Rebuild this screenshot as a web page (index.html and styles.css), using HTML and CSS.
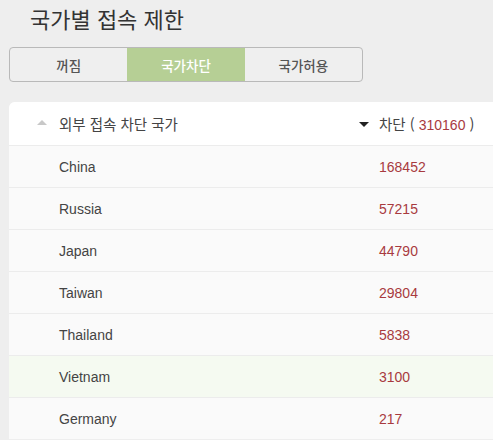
FILE: index.html
```html
<!DOCTYPE html>
<html lang="ko">
<head>
<meta charset="utf-8">
<title>국가별 접속 제한</title>
<link rel="stylesheet" href="styles.css">
</head>
<body>
<div class="page">
  <h1 class="title">국가별 접속 제한</h1>
  <div class="seg">
    <button class="seg-btn">꺼짐</button>
    <button class="seg-btn active">국가차단</button>
    <button class="seg-btn">국가허용</button>
  </div>
  <div class="panel">
    <div class="row head">
      <div class="col-name"><span class="caret up"></span>외부 접속 차단 국가</div>
      <div class="col-count"><span class="caret down"></span>차단 ( <span class="num">310160</span> )</div>
    </div>
    <div class="row"><div class="col-name">China</div><div class="col-count num">168452</div></div>
    <div class="row"><div class="col-name">Russia</div><div class="col-count num">57215</div></div>
    <div class="row"><div class="col-name">Japan</div><div class="col-count num">44790</div></div>
    <div class="row"><div class="col-name">Taiwan</div><div class="col-count num">29804</div></div>
    <div class="row"><div class="col-name">Thailand</div><div class="col-count num">5838</div></div>
    <div class="row hover"><div class="col-name">Vietnam</div><div class="col-count num">3100</div></div>
    <div class="row"><div class="col-name">Germany</div><div class="col-count num">217</div></div>
  </div>
</div>
</body>
</html>
```
FILE: styles.css
```css
html, body {
  margin: 0;
  padding: 0;
  background: #eeeeee;
  overflow: hidden;
}
body {
  font-family: "Liberation Sans", "Noto Sans CJK KR", Arial, sans-serif;
  color: #444;
}
.page {
  padding: 0 0 0 9px;
}
.title {
  margin: 0;
  padding: 4px 0 0 21px;
  height: 47px;
  box-sizing: border-box;
  font-family: "Noto Sans CJK KR", sans-serif;
  font-weight: 400;
  font-size: 22px;
  line-height: 28px;
  color: #333;
}
.seg {
  display: flex;
  width: 354px;
  height: 35px;
  border: 1px solid #b9b9b9;
  border-radius: 4px;
  box-sizing: border-box;
  overflow: hidden;
  background: #efefef;
}
.seg-btn {
  flex: 1;
  border: 0;
  margin: 0;
  padding: 0;
  background: transparent;
  font-family: "Noto Sans CJK KR", sans-serif;
  font-size: 13.5px;
  font-weight: 500;
  color: #555;
}
.seg-btn + .seg-btn {
  border-left: 1px solid #c4c4c4;
}
.seg-btn.active {
  background: #b6cf95;
  color: #fff;
  border-left: 0;
}
.seg-btn.active + .seg-btn {
  border-left: 0;
}
.panel {
  margin-top: 20px;
  background: #fafafa;
  border-radius: 6px 0 0 0;
  overflow: hidden;
}
.row {
  display: flex;
  align-items: center;
  height: 41px;
  border-top: 1px solid #ececec;
  font-size: 14px;
  color: #444;
}
.row.head {
  height: 43px;
  border-top: 0;
  background: #fff;
  font-family: "Noto Sans CJK KR", sans-serif;
  font-size: 14.5px;
  color: #444;
}
.row.hover {
  background: #f5faf1;
}
.col-name {
  width: 320px;
  padding-left: 50px;
  box-sizing: border-box;
  position: relative;
}
.col-count {
  padding-left: 50px;
  position: relative;
}
.num {
  color: #a83a3f;
  font-family: "Liberation Sans", Arial, sans-serif;
  font-size: 14px;
}
.caret {
  position: absolute;
  top: 50%;
  width: 0;
  height: 0;
  border-left: 5px solid transparent;
  border-right: 5px solid transparent;
}
.col-name .caret { left: 28px; }
.col-count .caret { left: 30px; }
.caret.up {
  margin-top: -4px;
  border-bottom: 5px solid #c8c8c8;
}
.caret.down {
  margin-top: -2px;
  border-top: 5px solid #222;
}
```
